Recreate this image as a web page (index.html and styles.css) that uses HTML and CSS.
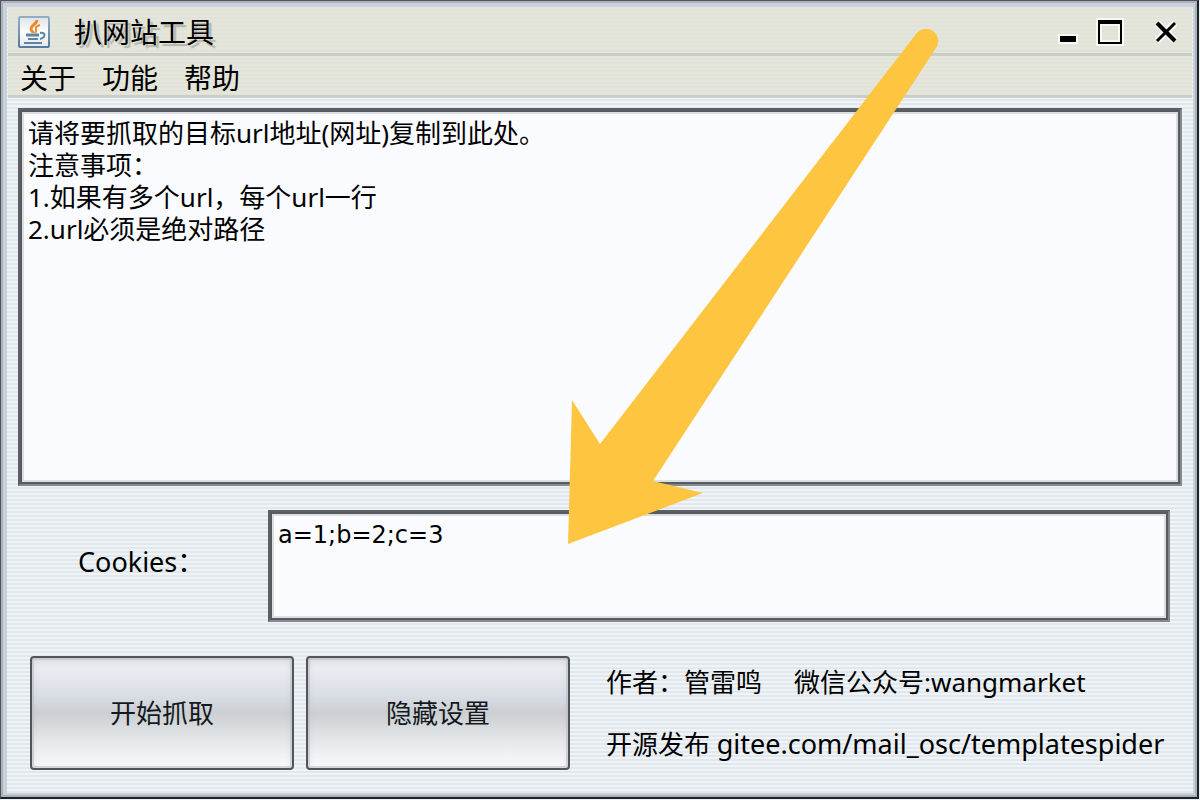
FILE: index.html
```
<!DOCTYPE html>
<html lang="zh-CN">
<head>
    <meta charset="UTF-8">
    <title>扒网站工具</title>
    <link rel="stylesheet" href="styles.css">
</head>
<body>
    <div class="window">
        <header class="title-bar">
            <svg class="logo" viewBox="0 0 32 32" aria-hidden="true">
                <defs>
                    <linearGradient id="logoBg" x1="0" y1="0" x2="0" y2="1">
                        <stop offset="0" stop-color="#dfe2e6"/>
                        <stop offset="0.5" stop-color="#fdfdfe"/>
                        <stop offset="1" stop-color="#e4e7ea"/>
                    </linearGradient>
                    <linearGradient id="logoEdge" x1="0" y1="0" x2="0" y2="1">
                        <stop offset="0" stop-color="#93aec4"/>
                        <stop offset="1" stop-color="#557c9c"/>
                    </linearGradient>
                </defs>
                <rect x="1" y="1" width="30" height="30" rx="1" fill="url(#logoBg)" stroke="url(#logoEdge)" stroke-width="2"/>
                <g fill="none" stroke="#ea8a2c" stroke-width="3">
                    <path d="M19 4c0 4-6 5-6 9 0 2 2 2 2 4"/>
                    <path d="M22 9c-3 1-5 2-4 4 0 2 1 2-1 4" stroke-width="2"/>
                </g>
                <g fill="none" stroke="#5b86a8" stroke-width="2">
                    <path d="M8 19h13" stroke-width="3"/>
                    <path d="M10 23h10M6 27h18"/>
                    <path d="M22 17c6-1 6 4 0 6"/>
                </g>
            </svg>
            <h1 class="title">扒网站工具</h1>
            <div class="controls">
                <button type="button" aria-label="最小化">
                    <svg width="20" height="28" viewBox="0 0 20 28"><path d="M0 16h20v10H0z" fill="#f8f8f4"/><path d="M2 18h16v6H2z"/></svg>
                </button>
                <button type="button" aria-label="最大化">
                    <svg width="28" height="28" viewBox="0 0 28 28"><path d="M0 0h28v28H0zM6 8v14h16V8z" fill="#f8f8f4" fill-rule="evenodd"/><path d="M2 2h24v24H2zM4 6v18h20V6z" fill-rule="evenodd"/></svg>
                </button>
                <button type="button" aria-label="关闭">
                    <svg width="24" height="28" viewBox="0 0 24 28"><path d="M3 5l18 18M21 5L3 23" stroke="#f8f8f4" stroke-width="7"/><path d="M3 5l18 18" stroke="#000" stroke-width="4"/><path d="M21 5L3 23" stroke="#000" stroke-width="3"/></svg>
                </button>
            </div>
        </header>
        <nav class="menu">
            <a href="#">关于</a>
            <a href="#">功能</a>
            <a href="#">帮助</a>
        </nav>
        <main class="content">
            <textarea class="field urls" aria-label="目标url" spellcheck="false">请将要抓取的目标url地址(网址)复制到此处。
注意事项：
1.如果有多个url，每个url一行
2.url必须是绝对路径</textarea>
            <div class="cookie-row">
                <label for="cookies">Cookies：</label>
                <textarea class="field" id="cookies" spellcheck="false">a=1;b=2;c=3</textarea>
            </div>
            <div class="footer">
                <button type="button" class="btn">开始抓取</button>
                <button type="button" class="btn">隐藏设置</button>
                <div class="about">
                    <p><span>作者：管雷鸣</span><span>微信公众号:wangmarket</span></p>
                    <p>开源发布 <span class="link">gitee.com/mail_osc/templatespider</span></p>
                </div>
            </div>
        </main>
        <!-- 箭头指向 Cookies 输入框 -->
        <svg class="arrow" viewBox="0 0 372 518" aria-hidden="true">
            <path d="M348 6 32 416 4 372 0 516 135 465 85 453 368 20A12 12 0 0 0 348 6Z" fill="#fec540"/>
        </svg>
    </div>
</body>
</html>
```
FILE: styles.css
```
*{
    margin: 0;
    padding: 0;
    box-sizing: border-box;
}

body{
    background-color: #eef0f0;
    font-family: "Noto Sans", "Noto Sans CJK SC", sans-serif;
    font-size: 26px;
    line-height: 32px;
    color: #000;
}

button, textarea{
    font: inherit;
    color: inherit;
    border: none;
}

.window{
    position: relative;
    display: flex;
    flex-direction: column;
    min-height: calc(100vh - 1px);
    margin: 0 1px 1px 0;
    padding: 6px 5px 5px 7px;
    border: 1px solid #50545a;
    border-right: 2px solid #1c232b;
    border-bottom: 2px solid #1c232b;
    background: repeating-linear-gradient(#eff4f8 0, #eff4f8 2px, #e2e7eb 2px, #e2e7eb 4px);
    box-shadow: inset 0 0 0 2px #adb1b8, inset 1px 1px 0 5px #c8d2df;
}

/* 标题栏 */
.title-bar, .menu{
    display: flex;
    align-items: center;
    background: repeating-linear-gradient(#e5e6db 0, #e5e6db 2px, #e1e2d8 2px, #e1e2d8 4px);
    border-bottom: 3px solid #cbcdc7;
    font-size: 28px;
}

.title-bar{
    height: 49px;
    padding: 3px 14px 0 10px;
}

.logo{
    width: 32px;
    height: 32px;
    margin-right: 24px;
}

.title{
    font-size: 28px;
    font-weight: normal;
    text-shadow: 3px 3px 1px #b5b6ae;
}

.controls{
    display: flex;
    margin-left: auto;
}

.controls button{
    background: none;
}

.controls button + button{
    margin-left: 18px;
}

.controls button:last-child{
    margin-left: 30px;
}

.controls svg{
    display: block;
}

.menu{
    height: 42px;
    gap: 26px;
    padding: 4px 12px 0;
}

.menu a{
    color: inherit;
    text-decoration: none;
}

/* 内容 */
.content{
    flex: 1;
    display: flex;
    flex-direction: column;
    padding: 10px 10px 22px;
}

.field{
    display: block;
    width: 100%;
    padding: 7px 8px;
    resize: none;
    outline: none;
    background-color: #fafbff;
    border: 2px solid #5c6165;
    border-right-color: #85898d;
    border-bottom-color: #85898d;
    box-shadow: inset 0 0 0 2px #555b60, inset 0 0 0 4px #dcdee0;
}

.urls{
    flex: 1;
    min-height: 200px;
}

.cookie-row{
    display: flex;
    align-items: center;
    padding: 24px 12px 0 60px;
}

.cookie-row label{
    width: 190px;
    flex-shrink: 0;
    padding-bottom: 8px;
    font-size: 27px;
}

#cookies{
    height: 112px;
    font-family: "DejaVu Sans", sans-serif;
    font-size: 24px;
}

.footer{
    display: flex;
    gap: 12px;
    padding: 34px 0 0 12px;
}

.btn{
    width: 264px;
    height: 114px;
    border: 2px solid #50565b;
    border-radius: 4px;
    background: linear-gradient(#e4e7eb, #e9ecf1 12%, #d6dae2 38%, #cbcfd2 50%, #dee1e3 68%, #f7f8fb 96%);
    box-shadow: inset 0 0 0 2px rgba(185, 185, 188, 0.5), inset 0 2px 6px rgba(170, 170, 175, 0.3);
    color: #14191d;
}

.about{
    display: flex;
    flex-direction: column;
    gap: 30px;
    padding: 10px 0 0 24px;
    white-space: nowrap;
}

.about span + span{
    margin-left: 32px;
}

.link{
    font-size: 27px;
}

.arrow{
    position: absolute;
    left: 567px;
    top: 27px;
    width: 372px;
    height: 518px;
    pointer-events: none;
}
```
